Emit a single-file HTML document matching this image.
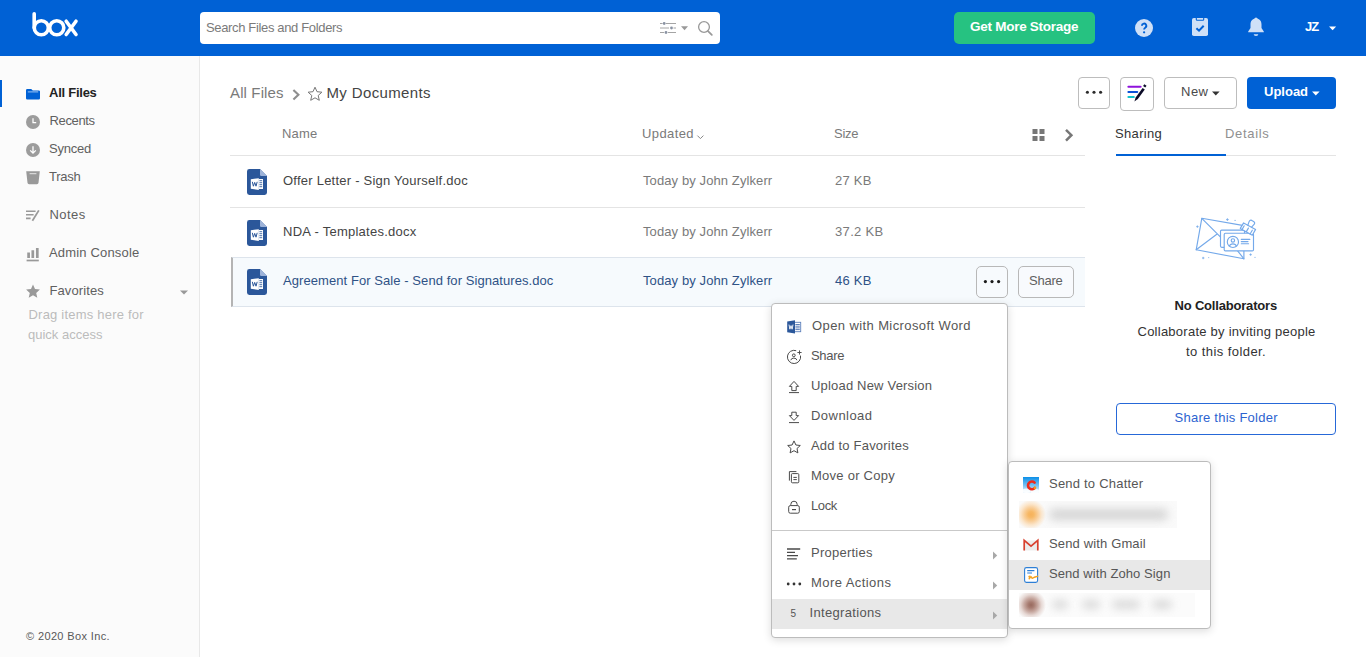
<!DOCTYPE html>
<html><head><meta charset="utf-8"><title>My Documents | Powered by Box</title>
<style>
html,body{margin:0;padding:0;}
body{width:1366px;height:657px;overflow:hidden;position:relative;background:#fff;font-family:"Liberation Sans",sans-serif;}
#root{position:absolute;left:0;top:0;width:1366px;height:657px;overflow:hidden;}
#root span{position:absolute;white-space:nowrap;line-height:1em;}
.a{position:absolute;box-sizing:border-box;}
svg{position:absolute;overflow:visible;}
</style></head><body><div id="root">
<!-- header -->
<div class="a" style="left:0;top:0;width:1366px;height:56px;background:#0061d5;"></div>
<svg style="left:0;top:0" width="100" height="50"><g fill="none" stroke="#fff" stroke-width="3.6" stroke-linecap="round"><path d="M34.2 13.8V27.75"/><circle cx="41.3" cy="27.75" r="7.05"/><circle cx="56.75" cy="27.75" r="7.05"/><path d="M66.2 21.2L76 34.5M76 21.2L66.2 34.5"/></g></svg>
<div class="a" style="left:200px;top:12px;width:520px;height:32px;background:#fff;border-radius:4px;"></div>
<!-- search icons -->
<svg style="left:655px;top:18px" width="62" height="20"><g stroke="#a4a4a4" stroke-width="1" fill="none"><path d="M5 5.5H7.5M11 5.5H21M5 10H14M18.5 10H21M5 14.5H9M13 14.5H21"/></g><g fill="#8a93a3"><circle cx="9.2" cy="5.5" r="1.4"/><circle cx="16.5" cy="10" r="1.4"/><circle cx="11" cy="14.5" r="1.4"/></g><path d="M26 8.2H33L29.5 12.2Z" fill="#999"/><circle cx="49" cy="9" r="5.4" fill="none" stroke="#999" stroke-width="1.3"/><path d="M53 13.2L56.8 16.8" stroke="#999" stroke-width="1.8" stroke-linecap="round"/></svg>
<!-- green button -->
<div class="a" style="left:954px;top:12px;width:141px;height:32px;background:#26c281;border-radius:5px;"></div>
<!-- help -->
<svg style="left:1130px;top:14px" width="28" height="28"><circle cx="14" cy="14" r="9" fill="#cfe0f7"/><path d="M11.900 11.800a2.200 2.200 0 1 1 3.300 1.900c-0.800 0.500-1.100 0.900-1.100 1.900" fill="none" stroke="#0061d5" stroke-width="1.900"/><circle cx="14.100" cy="18.300" r="1.150" fill="#0061d5"/></svg>
<!-- clipboard -->
<svg style="left:1188px;top:14px" width="24" height="26"><rect x="4" y="4" width="16" height="18" rx="1.800" fill="#cfe0f7"/><path d="M8.300 4V5.400a0.800 0.800 0 0 0 0.800 0.800H14.900a0.800 0.800 0 0 0 0.800-0.800V4" fill="#cfe0f7" stroke="#0061d5" stroke-width="1.100"/><path d="M8.400 14.200l2.600 2.500l4.700-5" fill="none" stroke="#0061d5" stroke-width="2"/></svg>
<!-- bell -->
<svg style="left:1244px;top:14px" width="24" height="26"><circle cx="12" cy="5" r="1.500" fill="#cfe0f7"/><path d="M12 4.600c-3.500 0-5.500 2.600-5.500 5.800v3.600l-2.300 3.400v0.900h15.600v-0.900l-2.300-3.400v-3.600c0-3.200-2-5.800-5.500-5.800z" fill="#cfe0f7"/><path d="M9.700 20.300h4.600a2.300 1.600 0 0 1-4.600 0z" fill="#cfe0f7"/></svg>
<svg style="left:1326px;top:22px" width="12" height="10"><path d="M3 4.4H10.2L6.6 8.2Z" fill="#fff"/></svg>

<!-- sidebar -->
<div class="a" style="left:0;top:56px;width:200px;height:601px;background:#fbfbfb;border-right:1px solid #e8e8e8;"></div>
<div class="a" style="left:0;top:80px;width:2px;height:27px;background:#0061d5;"></div>
<!-- folder -->
<svg style="left:24px;top:84px" width="20" height="20"><path d="M2 6.2a1.2 1.2 0 0 1 1.2-1.2h4l1.600 1.400h6a1.200 1.200 0 0 1 1.200 1.200v6.600a1.200 1.200 0 0 1-1.200 1.200H3.200A1.200 1.200 0 0 1 2 14.200z" fill="#0061d5"/><rect x="3.8" y="7.4" width="10.4" height="1" fill="#9cc3f3"/></svg>
<!-- clock -->
<svg style="left:24px;top:112px" width="20" height="20"><circle cx="9" cy="10" r="7" fill="#9c9c9c"/><path d="M9 6.2V10.6H12.2" fill="none" stroke="#fff" stroke-width="1.25"/></svg>
<!-- synced -->
<svg style="left:24px;top:140px" width="20" height="20"><circle cx="9" cy="10" r="7" fill="#9c9c9c"/><path d="M9 6.2V13M6.2 10.4L9 13.2L11.8 10.4" fill="none" stroke="#fff" stroke-width="1.3"/></svg>
<!-- trash -->
<svg style="left:24px;top:168px" width="20" height="20"><path d="M2.2 3.2H15.8L14.5 14.8a1.6 1.6 0 0 1-1.6 1.4H5.1a1.6 1.6 0 0 1-1.6-1.4z" fill="#999"/><rect x="5.6" y="5.2" width="6.8" height="1" fill="#e6e6e6"/></svg>
<!-- notes -->
<svg style="left:24px;top:206px" width="20" height="20"><path d="M2 5.2H11.6M2 8.8H9.6M2 12.4H6.6" stroke="#999" stroke-width="1.6" fill="none"/><path d="M14.8 4.400L8.400 14.8" stroke="#999" stroke-width="1.8" fill="none"/></svg>
<!-- admin -->
<svg style="left:24px;top:244px" width="20" height="20"><path d="M4.600 8.400V14M8.800 6.200V14M13.3 4V14" stroke="#999" stroke-width="2.700" fill="none"/><path d="M2.6 16.5H14.800" stroke="#999" stroke-width="1.700"/></svg>
<!-- star -->
<svg style="left:24px;top:282px" width="20" height="20"><path d="M9 2.6l2 4.5l4.9 0.5l-3.7 3.3l1.1 4.8L9 13.2l-4.3 2.5l1.1-4.8L2.1 7.6l4.9-0.5z" fill="#999"/></svg>
<svg style="left:178px;top:286px" width="12" height="10"><path d="M2 4.4H10L6 8.4Z" fill="#999"/></svg>

<!-- breadcrumb -->
<svg style="left:288px;top:84px" width="50" height="20"><path d="M5.4 6L10.4 10.7L5.4 15.4" fill="none" stroke="#8e8e8e" stroke-width="2.1"/><path d="M27 3.2l2 4.5l4.9 0.5l-3.7 3.3l1.1 4.8L27 13.8l-4.3 2.5l1.1-4.8L20.1 8.2l4.9-0.5z" fill="none" stroke="#777" stroke-width="1"/></svg>
<!-- toolbar buttons -->
<div class="a" style="left:1078px;top:77px;width:32px;height:32px;border:1px solid #bdbdbd;border-radius:4px;background:#fff;"></div>
<svg style="left:1078px;top:77px" width="32" height="32"><circle cx="9.4" cy="15.2" r="1.55" fill="#2a2a2a"/><circle cx="16" cy="15.2" r="1.55" fill="#2a2a2a"/><circle cx="22.6" cy="15.2" r="1.55" fill="#2a2a2a"/></svg>
<div class="a" style="left:1120px;top:77px;width:34px;height:34px;border:1px solid #bdbdbd;border-radius:4px;background:#fff;"></div>
<svg style="left:1120px;top:77px" width="34" height="34"><g stroke-width="2.1" stroke-linecap="round"><path d="M8.4 9.8H20.6" stroke="#8e12dc"/><path d="M8.4 15H17.2" stroke="#0a50d8"/><path d="M8.4 20H13.8" stroke="#12c2cc"/></g><path d="M14.4 24.5L15.67 20.47L22.61 11L24.79 12.6L17.85 22.07z" fill="#0b0b28"/><path d="M26.54 8.81L24.36 7.22L23.06 8.99L25.24 10.58z" fill="#0b0b28"/></svg>
<div class="a" style="left:1164px;top:77px;width:73px;height:32px;border:1px solid #bdbdbd;border-radius:4px;background:#fff;"></div>
<svg style="left:1210.200px;top:87.600px" width="12" height="10"><path d="M2 3.4H9.6L5.8 7.4Z" fill="#333"/></svg>
<div class="a" style="left:1247px;top:77px;width:89px;height:32px;border-radius:4px;background:#0061d5;"></div>
<svg style="left:1309.800px;top:87.600px" width="12" height="10"><path d="M2 3.4H9.6L5.8 7.4Z" fill="#fff"/></svg>

<!-- table -->
<div class="a" style="left:230px;top:155px;width:855px;height:1px;background:#e4e4e4;"></div>
<div class="a" style="left:230px;top:207px;width:855px;height:1px;background:#e4e4e4;"></div>
<div class="a" style="left:231px;top:257px;width:854px;height:50px;background:#f6fafd;border-top:1px solid #dde4ec;border-bottom:1px solid #dde4ec;border-left:2px solid #b4b4b4;"></div>
<svg style="left:695.400px;top:129.600px" width="14" height="14"><path d="M2.4 5.6L5.4 8.6L8.4 5.6" fill="none" stroke="#888" stroke-width="1"/></svg>
<svg style="left:1030px;top:126px" width="50" height="18"><g fill="#777"><rect x="2.5" y="3" width="5" height="5"/><rect x="9.5" y="3" width="5" height="5"/><rect x="2.5" y="10" width="5" height="5"/><rect x="9.5" y="10" width="5" height="5"/></g><path d="M36 3.800L41.4 9.2L36 14.600" fill="none" stroke="#777" stroke-width="2.500"/></svg>
<svg style="left:247px;top:169px" width="20" height="26"><path d="M2.4 0H13L20 7V23.6a2.4 2.4 0 0 1-2.4 2.4H2.4A2.4 2.4 0 0 1 0 23.6V2.4A2.4 2.4 0 0 1 2.4 0z" fill="#2b579a"/><path d="M13 0L20 7H14.2a1.2 1.2 0 0 1-1.2-1.2z" fill="#9db3d9"/><path d="M11.6 10H16V20H11.6z" fill="#fff"/><path d="M12.4 11.7H15.2M12.4 13.7H15.2M12.4 15.7H15.2M12.4 17.7H15.2" stroke="#2b579a" stroke-width="1" opacity=".85"/><path d="M3.8 10.3L11.8 9.2V20.9L3.8 19.8z" fill="#fff"/><path d="M5.3 12.8L6.4 17.2L7.7 13.4L9 17.2L10.2 12.8" fill="none" stroke="#2b579a" stroke-width="1"/></svg><svg style="left:247px;top:220px" width="20" height="26"><path d="M2.4 0H13L20 7V23.6a2.4 2.4 0 0 1-2.4 2.4H2.4A2.4 2.4 0 0 1 0 23.6V2.4A2.4 2.4 0 0 1 2.4 0z" fill="#2b579a"/><path d="M13 0L20 7H14.2a1.2 1.2 0 0 1-1.2-1.2z" fill="#9db3d9"/><path d="M11.6 10H16V20H11.6z" fill="#fff"/><path d="M12.4 11.7H15.2M12.4 13.7H15.2M12.4 15.7H15.2M12.4 17.7H15.2" stroke="#2b579a" stroke-width="1" opacity=".85"/><path d="M3.8 10.3L11.8 9.2V20.9L3.8 19.8z" fill="#fff"/><path d="M5.3 12.8L6.4 17.2L7.7 13.4L9 17.2L10.2 12.8" fill="none" stroke="#2b579a" stroke-width="1"/></svg><svg style="left:247px;top:268.5px" width="20" height="26"><path d="M2.4 0H13L20 7V23.6a2.4 2.4 0 0 1-2.4 2.4H2.4A2.4 2.4 0 0 1 0 23.6V2.4A2.4 2.4 0 0 1 2.4 0z" fill="#2b579a"/><path d="M13 0L20 7H14.2a1.2 1.2 0 0 1-1.2-1.2z" fill="#9db3d9"/><path d="M11.6 10H16V20H11.6z" fill="#fff"/><path d="M12.4 11.7H15.2M12.4 13.7H15.2M12.4 15.7H15.2M12.4 17.7H15.2" stroke="#2b579a" stroke-width="1" opacity=".85"/><path d="M3.8 10.3L11.8 9.2V20.9L3.8 19.8z" fill="#fff"/><path d="M5.3 12.8L6.4 17.2L7.7 13.4L9 17.2L10.2 12.8" fill="none" stroke="#2b579a" stroke-width="1"/></svg>
<!-- row buttons -->
<div class="a" style="left:976px;top:266px;width:32px;height:32px;border:1px solid #b8b8b8;border-radius:5px;background:#f7fafd;"></div>
<svg style="left:976px;top:266px" width="32" height="32"><circle cx="9.4" cy="15.6" r="1.6" fill="#1a1a1a"/><circle cx="16" cy="15.6" r="1.6" fill="#1a1a1a"/><circle cx="22.6" cy="15.6" r="1.6" fill="#1a1a1a"/></svg>
<div class="a" style="left:1018px;top:266px;width:56px;height:32px;border:1px solid #b8b8b8;border-radius:5px;background:#f8fafd;"></div>

<!-- right panel -->
<div class="a" style="left:1116px;top:155px;width:220px;height:1px;background:#e4e4e4;"></div>
<div class="a" style="left:1116px;top:154px;width:110px;height:2px;background:#0061d5;"></div>
<svg style="left:1180px;top:200px" width="90" height="70"><g fill="none" stroke="#74a9ea" stroke-width="1.150" stroke-linejoin="round" stroke-linecap="round"><path d="M21.800 18.300L63.9 25.6L63.9 58.800L16.200 49.800z" fill="#fff"/><path d="M21.800 18.300L40.6 37.200M16.200 49.800L36.800 34.200"/><path d="M57.600 50.800L63.9 58.800"/><rect x="40.500" y="30.100" width="24" height="17.200" rx="1.2" fill="#fff"/><rect x="44.200" y="33.200" width="29.300" height="17.700" rx="1.200" fill="#fff"/><circle cx="52.900" cy="41.900" r="5.600"/><circle cx="52.900" cy="40.400" r="1.700"/><path d="M49.400 46a3.600 2.800 0 0 1 7 0"/><path d="M61.300 39.400H69.800M61.300 41.600H68M61.300 43.700H68.600"/><path d="M60.300 28.400L63.600 22.900L75.600 29.400L72.300 35.200z" fill="#fff"/><path d="M64.200 25.800L62 29.600M68.400 28.100L66.200 31.900M72.300 30.200L70.100 34"/><path d="M67.800 25.200L69.200 21.400a2 2 0 0 1 2.600-1l1.800 1a2 2 0 0 1 0.700 2.700L71.600 27.200"/></g><g stroke="#74a9ea" stroke-width="0.9" fill="none" opacity=".9"><path d="M47.400 18.200V21M46 19.600H48.800M54.400 20.400H55.800M17.400 25.400V27.800M16.200 26.600H18.600M23.200 56.800V59.200M22 58H24.400M28.200 57.600H29.200M70.600 53.400V55.800M69.400 54.600H71.800M74.400 57.400H75.600"/></g></svg>
<div class="a" style="left:1116px;top:403px;width:220px;height:32px;border:1px solid #2668d8;border-radius:4px;background:#fff;"></div>

<!-- context menu -->
<div class="a" style="left:771px;top:303px;width:237px;height:335px;border:1px solid #bcbcbc;border-radius:4px;background:#fff;box-shadow:0 2px 8px rgba(0,0,0,.14);"></div>
<div class="a" style="left:772px;top:530px;width:235px;height:1px;background:#c9c9c9;"></div>
<div class="a" style="left:772px;top:599px;width:235px;height:30px;background:#e8e8e8;"></div>
<svg style="left:787px;top:320px" width="14" height="14"><rect x="6.5" y="2.300" width="7.200" height="9.400" fill="#fff" stroke="#5d80bb" stroke-width="0.900"/><path d="M8.4 4.5H12.800M8.4 6.200H12.800M8.4 7.900H12.800M8.4 9.600H12.800" stroke="#4a70b0" stroke-width="0.900"/><path d="M0.2 1.6L8 0.2V13.6L0.2 12.2z" fill="#2b579a"/><path d="M2 4.6L2.9 9.2L4 5.6L5.1 9.2L6 4.6" fill="none" stroke="#fff" stroke-width="0.9"/></svg><svg style="left:786px;top:349px" width="17" height="17"><g fill="none" stroke="#4a4a4a" stroke-width="1"><path d="M10.2 1.7A6.6 6.6 0 1 0 14.5 6.6"/><circle cx="7.8" cy="6.3" r="1.4"/><path d="M4.8 11.2a3.1 2.6 0 0 1 6.1 0"/><path d="M13.5 1.4V5.600M11.400 3.5H15.600" stroke-width="0.950"/></g></svg><svg style="left:787px;top:380px" width="14" height="15"><g fill="none" stroke="#4a4a4a" stroke-width="1" stroke-linejoin="round"><path d="M7 1.4L11.6 6.4H9.2V10.6H4.8V6.4H2.4z"/><path d="M2 12.6H12"/></g></svg><svg style="left:787px;top:410px" width="14" height="15"><g fill="none" stroke="#4a4a4a" stroke-width="1" stroke-linejoin="round"><path d="M7 10.4L2.4 5.6H4.8V2.2H9.2V5.6H11.6z"/><path d="M2 12.6H12"/></g></svg><svg style="left:787px;top:440px" width="14" height="14"><path d="M7 0.9l1.9 4.1l4.4 0.5l-3.3 3l0.9 4.4L7 10.7l-3.9 2.2l0.9-4.4l-3.3-3l4.4-0.5z" fill="none" stroke="#4a4a4a" stroke-width="1" stroke-linejoin="round"/></svg><svg style="left:787px;top:470px" width="14" height="14"><g fill="none" stroke="#4a4a4a" stroke-width="1"><path d="M2.4 10.6V1.6H9.4"/><rect x="4.4" y="3.6" width="7.4" height="9.2" rx="1"/><path d="M6.4 7.4H9.8M6.4 9.6H9.8"/></g></svg><svg style="left:787px;top:500px" width="14" height="14"><g fill="none" stroke="#4a4a4a" stroke-width="1"><rect x="1.7" y="5.6" width="10.6" height="7.6" rx="1.6"/><path d="M3.8 5.6V4.4a3.2 3.2 0 0 1 6.4 0V5.6"/><path d="M5 9.6H9" stroke-width="1.2"/></g></svg><svg style="left:787px;top:547px" width="14" height="14"><g fill="none" stroke="#4a4a4a" stroke-width="1.35"><path d="M0 2H13.2M0 5.3H8M0 8.6H11M0 11.9H9.8"/></g></svg><svg style="left:786px;top:578px" width="16" height="10"><g fill="#333"><circle cx="2.2" cy="6" r="1.4"/><circle cx="8" cy="6" r="1.4"/><circle cx="13.8" cy="6" r="1.4"/></g></svg><svg style="left:992px;top:551.2px" width="8" height="10"><path d="M1 0.6L5.2 4.6L1 8.6z" fill="#a8a8a8"/></svg><svg style="left:992px;top:581.2px" width="8" height="10"><path d="M1 0.6L5.2 4.6L1 8.6z" fill="#a8a8a8"/></svg><svg style="left:992px;top:611.2px" width="8" height="10"><path d="M1 0.6L5.2 4.6L1 8.6z" fill="#a8a8a8"/></svg>
<!-- submenu -->
<div class="a" style="left:1008px;top:461px;width:203px;height:168px;border:1px solid #bcbcbc;border-radius:4px;background:#fff;box-shadow:0 2px 8px rgba(0,0,0,.14);"></div>
<div class="a" style="left:1009px;top:560px;width:201px;height:30px;background:#e8e8e8;"></div>
<svg style="left:1023px;top:477px" width="16" height="16"><defs><linearGradient id="cg" x1="0" y1="0" x2="0" y2="1"><stop offset="0" stop-color="#0b8fe8"/><stop offset=".55" stop-color="#7cc4f2"/><stop offset="1" stop-color="#f4f9fd"/></linearGradient></defs><rect width="16" height="16" fill="url(#cg)"/><ellipse cx="3.500" cy="13.800" rx="4" ry="2.200" fill="#fff" opacity=".85"/><ellipse cx="12" cy="14.200" rx="4.500" ry="2.200" fill="#fff" opacity=".85"/><path d="M11.6 5.600a3.900 3.900 0 1 0 0.300 5.300" fill="none" stroke="#ee2b1a" stroke-width="2.600" stroke-linecap="round"/><circle cx="11.900" cy="10.900" r="1.300" fill="#f59a1c"/></svg><div class="a" style="left:1019px;top:501px;width:158px;height:27px;background:#fafafa;overflow:hidden;"><div class="a" style="left:-4px;top:-3px;width:32px;height:33px;background:radial-gradient(circle at 16px 16.5px,#f6b15a 0,#f7b967 3px,#f9cf9b 7px,#fbe6cc 10.5px,rgba(250,250,250,0) 15px);"></div><div class="a" style="left:30px;top:8px;width:119px;height:11px;border-radius:5px;background:#c4c4c4;filter:blur(5px);opacity:.7"></div></div><svg style="left:1023px;top:539.300px" width="16" height="12"><path d="M1 1.4H15V11.4H1z" fill="#ececec"/><path d="M1.2 11.4V1.4L8 7.2L14.8 1.4V11.4" fill="none" stroke="#d8402f" stroke-width="1.700" stroke-linejoin="miter"/></svg><svg style="left:1024px;top:567px" width="15" height="16"><rect x="0.6" y="0.6" width="13" height="14.8" rx="1.8" fill="#fff" stroke="#2d7fd6" stroke-width="1.1"/><path d="M3.2 3.6H10.4M3.2 6H8" stroke="#2d7fd6" stroke-width="1.1"/><path d="M4.4 9.600l1.600-0.400l-0.800 2.600c1.200-1.800 2.200-2.400 2.400-1.400s0.800 1.200 1.800 0.400s2-0.800 4.800-1.600" fill="none" stroke="#f4a321" stroke-width="1.400" stroke-linejoin="round"/></svg><div class="a" style="left:1019px;top:593px;width:176px;height:24px;background:#fbfbfb;overflow:hidden;"><div class="a" style="left:-4px;top:-4px;width:32px;height:32px;background:radial-gradient(circle at 16px 16px,#986a5e 0,#a87d72 3px,#c8aaa2 7px,#e6d8d4 10.5px,rgba(251,251,251,0) 15px);"></div><div class="a" style="left:33px;top:7px;width:16px;height:9px;border-radius:5px;background:#cdcdcd;filter:blur(4.5px);opacity:.7"></div><div class="a" style="left:63px;top:7px;width:18px;height:9px;border-radius:5px;background:#cdcdcd;filter:blur(4.5px);opacity:.7"></div><div class="a" style="left:93px;top:7px;width:28px;height:9px;border-radius:5px;background:#cdcdcd;filter:blur(4.5px);opacity:.7"></div><div class="a" style="left:133px;top:7px;width:20px;height:9px;border-radius:5px;background:#cdcdcd;filter:blur(4.5px);opacity:.7"></div></div>
<span id="t0" style="left:206.00px;top:21.15px;font-size:13px;color:#7a7a7a;font-weight:400;letter-spacing:-0.348px;">Search Files and Folders</span>
<span id="t1" style="left:970.00px;top:19.71px;font-size:13.5px;color:#fff;font-weight:700;letter-spacing:-0.267px;">Get More Storage</span>
<span id="t2" style="left:1305.00px;top:19.85px;font-size:13px;color:#fff;font-weight:700;letter-spacing:-1.000px;">JZ</span>
<span id="t3" style="left:49.00px;top:86.15px;font-size:13px;color:#222;font-weight:700;letter-spacing:-0.250px;">All Files</span>
<span id="t4" style="left:49.50px;top:114.15px;font-size:13px;color:#606060;font-weight:400;letter-spacing:-0.367px;">Recents</span>
<span id="t5" style="left:49.00px;top:142.15px;font-size:13px;color:#606060;font-weight:400;letter-spacing:-0.240px;">Synced</span>
<span id="t6" style="left:49.00px;top:170.15px;font-size:13px;color:#606060;font-weight:400;letter-spacing:-0.250px;">Trash</span>
<span id="t7" style="left:49.50px;top:208.15px;font-size:13px;color:#606060;font-weight:400;letter-spacing:0.450px;">Notes</span>
<span id="t8" style="left:49.00px;top:246.15px;font-size:13px;color:#606060;font-weight:400;letter-spacing:0.167px;">Admin Console</span>
<span id="t9" style="left:49.50px;top:284.15px;font-size:13px;color:#606060;font-weight:400;letter-spacing:0.100px;">Favorites</span>
<span id="t10" style="left:28.50px;top:308.15px;font-size:13px;color:#bcbcbc;font-weight:400;letter-spacing:0.211px;">Drag items here for</span>
<span id="t11" style="left:28.00px;top:328.15px;font-size:13px;color:#bcbcbc;font-weight:400;letter-spacing:0.000px;">quick access</span>
<span id="t12" style="left:26.00px;top:631.13px;font-size:11px;color:#585858;font-weight:400;letter-spacing:0.371px;">© 2020 Box Inc.</span>
<span id="t13" style="left:230.00px;top:85.47px;font-size:15px;color:#7a7a7a;font-weight:400;letter-spacing:0.125px;">All Files</span>
<span id="t14" style="left:326.50px;top:85.47px;font-size:15px;color:#444;font-weight:400;letter-spacing:0.364px;">My Documents</span>
<span id="t15" style="left:282.00px;top:127.15px;font-size:13px;color:#7a7a7a;font-weight:400;letter-spacing:0.200px;">Name</span>
<span id="t16" style="left:642.00px;top:127.15px;font-size:13px;color:#7a7a7a;font-weight:400;letter-spacing:0.400px;">Updated</span>
<span id="t17" style="left:834.00px;top:127.15px;font-size:13px;color:#7a7a7a;font-weight:400;letter-spacing:-0.267px;">Size</span>
<span id="t18" style="left:283.00px;top:174.15px;font-size:13px;color:#444;font-weight:400;letter-spacing:0.232px;">Offer Letter - Sign Yourself.doc</span>
<span id="t19" style="left:283.00px;top:225.15px;font-size:13px;color:#444;font-weight:400;letter-spacing:0.263px;">NDA - Templates.docx</span>
<span id="t20" style="left:283.00px;top:274.15px;font-size:13px;color:#2f5286;font-weight:400;letter-spacing:0.070px;">Agreement For Sale - Send for Signatures.doc</span>
<span id="t21" style="left:643.00px;top:174.15px;font-size:13px;color:#7a7a7a;font-weight:400;letter-spacing:0.100px;">Today by John Zylkerr</span>
<span id="t22" style="left:643.00px;top:225.15px;font-size:13px;color:#7a7a7a;font-weight:400;letter-spacing:0.100px;">Today by John Zylkerr</span>
<span id="t23" style="left:643.00px;top:274.15px;font-size:13px;color:#2f5286;font-weight:400;letter-spacing:0.100px;">Today by John Zylkerr</span>
<span id="t24" style="left:835.00px;top:174.15px;font-size:13px;color:#7a7a7a;font-weight:400;letter-spacing:0.250px;">27 KB</span>
<span id="t25" style="left:835.00px;top:225.15px;font-size:13px;color:#7a7a7a;font-weight:400;letter-spacing:0.333px;">37.2 KB</span>
<span id="t26" style="left:835.00px;top:274.15px;font-size:13px;color:#2f5286;font-weight:400;letter-spacing:0.250px;">46 KB</span>
<span id="t27" style="left:1029.00px;top:274.15px;font-size:13px;color:#606060;font-weight:400;letter-spacing:-0.250px;">Share</span>
<span id="t28" style="left:1181.00px;top:84.85px;font-size:13px;color:#4a4a4a;font-weight:400;letter-spacing:0.500px;">New</span>
<span id="t29" style="left:1264.00px;top:84.85px;font-size:13px;color:#fff;font-weight:700;letter-spacing:0.000px;">Upload</span>
<span id="t30" style="left:1115.00px;top:127.15px;font-size:13px;color:#333;font-weight:400;letter-spacing:0.333px;">Sharing</span>
<span id="t31" style="left:1225.00px;top:127.15px;font-size:13px;color:#909090;font-weight:400;letter-spacing:0.667px;">Details</span>
<span id="t32" style="left:1174.50px;top:299.15px;font-size:13px;color:#222;font-weight:700;letter-spacing:-0.187px;">No Collaborators</span>
<span id="t33" style="left:1137.50px;top:325.15px;font-size:13px;color:#333;font-weight:400;letter-spacing:0.248px;">Collaborate by inviting people</span>
<span id="t34" style="left:1186.00px;top:345.15px;font-size:13px;color:#333;font-weight:400;letter-spacing:0.429px;">to this folder.</span>
<span id="t35" style="left:1174.50px;top:411.15px;font-size:13px;color:#2d63d0;font-weight:400;letter-spacing:0.250px;">Share this Folder</span>
<span id="t36" style="left:812.00px;top:319.15px;font-size:13px;color:#565656;font-weight:400;letter-spacing:0.400px;">Open with Microsoft Word</span>
<span id="t37" style="left:811.00px;top:349.15px;font-size:13px;color:#565656;font-weight:400;letter-spacing:-0.300px;">Share</span>
<span id="t38" style="left:811.00px;top:379.15px;font-size:13px;color:#565656;font-weight:400;letter-spacing:0.188px;">Upload New Version</span>
<span id="t39" style="left:811.00px;top:409.15px;font-size:13px;color:#565656;font-weight:400;letter-spacing:0.457px;">Download</span>
<span id="t40" style="left:811.00px;top:439.15px;font-size:13px;color:#565656;font-weight:400;letter-spacing:0.200px;">Add to Favorites</span>
<span id="t41" style="left:811.00px;top:469.15px;font-size:13px;color:#565656;font-weight:400;letter-spacing:0.255px;">Move or Copy</span>
<span id="t42" style="left:811.00px;top:499.15px;font-size:13px;color:#565656;font-weight:400;letter-spacing:-0.400px;">Lock</span>
<span id="t43" style="left:811.00px;top:546.15px;font-size:13px;color:#565656;font-weight:400;letter-spacing:0.244px;">Properties</span>
<span id="t44" style="left:811.00px;top:576.15px;font-size:13px;color:#565656;font-weight:400;letter-spacing:0.436px;">More Actions</span>
<span id="t45" style="left:809.50px;top:606.15px;font-size:13px;color:#565656;font-weight:400;letter-spacing:0.327px;">Integrations</span>
<span id="t46" style="left:790.50px;top:608.62px;font-size:10px;color:#555;font-weight:400;letter-spacing:2.000px;">5</span>
<span id="t47" style="left:1049.00px;top:477.15px;font-size:13px;color:#565656;font-weight:400;letter-spacing:0.214px;">Send to Chatter</span>
<span id="t48" style="left:1049.00px;top:537.15px;font-size:13px;color:#565656;font-weight:400;letter-spacing:0.143px;">Send with Gmail</span>
<span id="t49" style="left:1049.00px;top:567.15px;font-size:13px;color:#565656;font-weight:400;letter-spacing:0.078px;">Send with Zoho Sign</span>
</div></body></html>
